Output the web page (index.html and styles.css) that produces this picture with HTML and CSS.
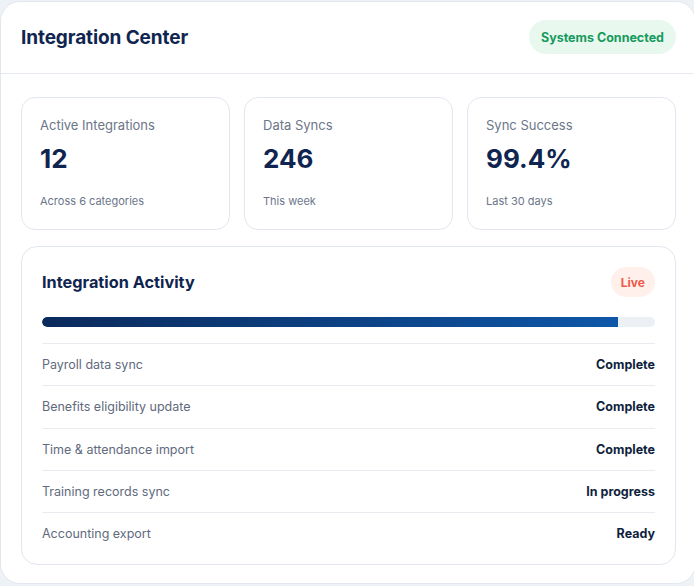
FILE: index.html
```html
<!DOCTYPE html>
<html lang="en">
<head>
<meta charset="utf-8">
<title>Integration Center</title>
<link rel="stylesheet" href="styles.css">
</head>
<body>
<div class="panel">
  <header class="panel-header">
    <h1 class="panel-title">Integration Center</h1>
    <span class="badge badge-green">Systems Connected</span>
  </header>
  <div class="panel-body">
    <div class="stats">
      <div class="stat">
        <div class="stat-label">Active Integrations</div>
        <div class="stat-value">12</div>
        <div class="stat-sub">Across 6 categories</div>
      </div>
      <div class="stat">
        <div class="stat-label">Data Syncs</div>
        <div class="stat-value">246</div>
        <div class="stat-sub">This week</div>
      </div>
      <div class="stat">
        <div class="stat-label">Sync Success</div>
        <div class="stat-value">99.4%</div>
        <div class="stat-sub">Last 30 days</div>
      </div>
    </div>
    <section class="activity">
      <div class="activity-head">
        <h2 class="activity-title">Integration Activity</h2>
        <span class="badge badge-red">Live</span>
      </div>
      <div class="progress"><div class="progress-fill" style="width: 94%"></div></div>
      <ul class="rows">
        <li class="row"><span class="row-label">Payroll data sync</span><span class="row-value">Complete</span></li>
        <li class="row"><span class="row-label">Benefits eligibility update</span><span class="row-value">Complete</span></li>
        <li class="row"><span class="row-label">Time &amp; attendance import</span><span class="row-value">Complete</span></li>
        <li class="row"><span class="row-label">Training records sync</span><span class="row-value">In progress</span></li>
        <li class="row"><span class="row-label">Accounting export</span><span class="row-value">Ready</span></li>
      </ul>
    </section>
  </div>
</div>
</body>
</html>
```
FILE: styles.css
```css
* { box-sizing: border-box; }
html, body {
  margin: 0;
  padding: 0;
  background: #eef1f6;
  overflow: hidden;
}
body {
  font-family: Inter, "Noto Sans", "Liberation Sans", sans-serif;
  color: #0f2550;
  padding-top: 1px;
}
.panel {
  width: 696px;
  background: #ffffff;
  border: 1px solid #e2e7ef;
  border-radius: 20px;
}
.panel-header {
  display: flex;
  align-items: center;
  justify-content: space-between;
  padding: 18px 19px 19px 20px;
  border-bottom: 1px solid #e6eaf0;
}
.panel-title {
  margin: 0;
  font-size: 19px;
  font-weight: 700;
  color: #0f2550;
  letter-spacing: -0.1px;
}
.badge {
  display: inline-flex;
  align-items: center;
  border-radius: 999px;
  font-weight: 700;
}
.badge-green {
  height: 34px;
  padding: 0 12px;
  font-size: 12.5px;
  background: #e8f8ef;
  color: #179a5e;
}
.badge-red {
  height: 30px;
  padding: 0 10px;
  font-size: 12px;
  background: #fff0ec;
  color: #f0594a;
}
.panel-body {
  padding: 23px 19px 18px 20px;
}
.stats {
  display: grid;
  grid-template-columns: 1fr 1fr 1fr;
  gap: 14px;
}
.stat {
  border: 1px solid #e2e7ef;
  border-radius: 14px;
  padding: 19px 18px 20px 18px;
  height: 133px;
}
.stat-label {
  font-size: 13px;
  line-height: 16px;
  color: #6b7689;
}
.stat-value {
  margin-top: 10px;
  font-size: 26px;
  line-height: 32px;
  font-weight: 700;
  color: #0f2550;
}
.stat-sub {
  margin-top: 19px;
  font-size: 11px;
  line-height: 14px;
  color: #6b7689;
}
.activity {
  margin-top: 16px;
  border: 1px solid #e2e7ef;
  border-radius: 16px;
  padding: 20px 20px 22px 20px;
}
.activity-head {
  display: flex;
  align-items: center;
  justify-content: space-between;
  height: 30px;
}
.activity-title {
  margin: 0;
  font-size: 16.3px;
  font-weight: 700;
  color: #0f2550;
}
.progress {
  margin-top: 20px;
  height: 10px;
  border-radius: 5px;
  background: #ecf0f5;
  overflow: hidden;
}
.progress-fill {
  height: 100%;
  border-radius: 5px 0 0 5px;
  background: linear-gradient(90deg, #0b2a5c 0%, #0e57a8 100%);
}
.rows {
  list-style: none;
  margin: 16px 0 0 0;
  padding: 0;
}
.row {
  display: flex;
  justify-content: space-between;
  align-items: center;
  border-top: 1px solid #e8ecf1;
  padding: 12px 0;
  font-size: 12.5px;
  line-height: 17.25px;
}
.row:last-child {
  padding-bottom: 0;
}
.row-label {
  color: #5f6a7d;
}
.row-value {
  font-weight: 700;
  color: #0f1f3d;
}
```
